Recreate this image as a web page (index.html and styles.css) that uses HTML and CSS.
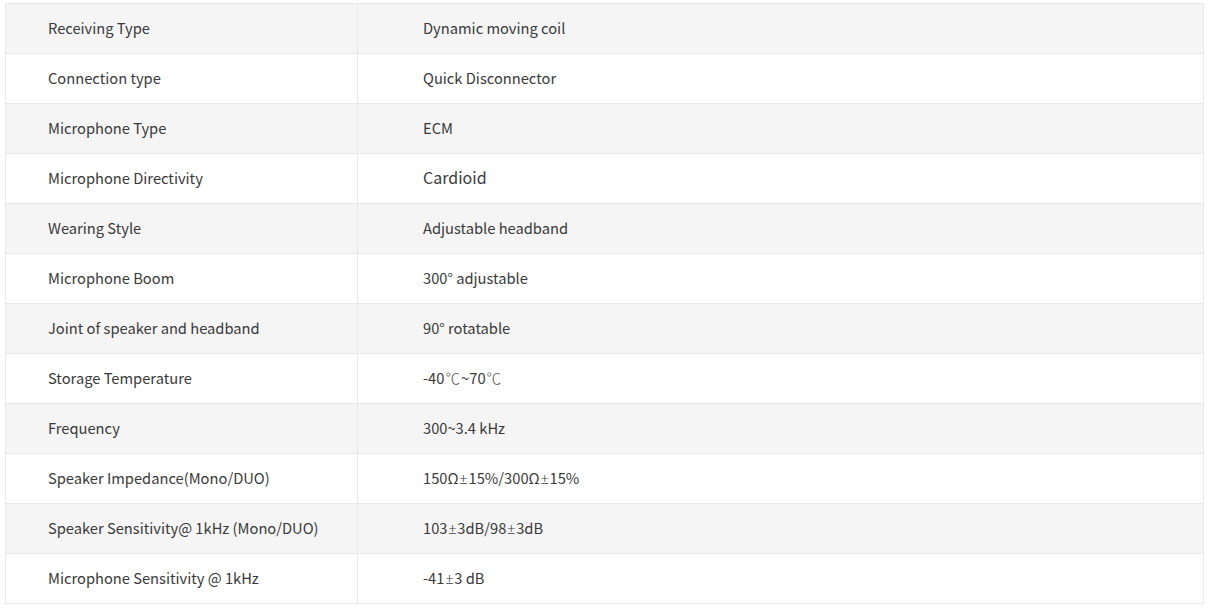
FILE: index.html
```html
<!DOCTYPE html>
<html>
<head>
<meta charset="utf-8">
<link rel="stylesheet" href="styles.css">
</head>
<body>
<div class="wrap">
<table class="spec">
<tbody>
<tr><td class="k">Receiving Type</td><td class="v">Dynamic moving coil</td></tr>
<tr><td class="k">Connection type</td><td class="v">Quick Disconnector</td></tr>
<tr><td class="k">Microphone Type</td><td class="v">ECM</td></tr>
<tr><td class="k">Microphone Directivity</td><td class="v"><span class="big">Cardioid</span></td></tr>
<tr><td class="k">Wearing Style</td><td class="v">Adjustable headband</td></tr>
<tr><td class="k">Microphone Boom</td><td class="v">300° adjustable</td></tr>
<tr><td class="k">Joint of speaker and headband</td><td class="v">90° rotatable</td></tr>
<tr><td class="k">Storage Temperature</td><td class="v">-40<span class="deg">℃</span>~70<span class="deg">℃</span></td></tr>
<tr><td class="k">Frequency</td><td class="v">300~3.4 kHz</td></tr>
<tr><td class="k">Speaker Impedance(Mono/DUO)</td><td class="v">150Ω<span class="sym">±</span>15%/300Ω<span class="sym">±</span>15%</td></tr>
<tr><td class="k">Speaker Sensitivity@ 1kHz (Mono/DUO)</td><td class="v">103<span class="sym">±</span>3dB/98<span class="sym">±</span>3dB</td></tr>
<tr><td class="k">Microphone Sensitivity @ 1kHz</td><td class="v">-41<span class="sym">±</span>3 dB</td></tr>
</tbody>
</table>
</div>
</body>
</html>
```
FILE: styles.css
```css
html, body {
  margin: 0;
  padding: 0;
  background: #fff;
}
.wrap {
  padding: 3px 6px 0 5px;
}
.spec {
  width: 1199px;
  border-collapse: collapse;
  table-layout: fixed;
  font-family: "Noto Sans CJK SC", "Noto Sans", sans-serif;
  font-size: 14.7px;
  font-weight: 400;
  color: #3a3a3a;
}
.spec tr {
  height: 50px;
}
.spec tr:nth-child(odd) {
  background: #f5f5f5;
}
.spec td {
  border: 1px solid #e9e9e9;
  padding: 0 0 2px 0;
  vertical-align: middle;
  line-height: 20px;
}
.spec td.k {
  width: 309px;
  padding-left: 42px;
}
.spec td.v {
  padding-left: 65px;
}
.big {
  font-size: 16px;
}
.sym {
  font-family: "Noto Sans", sans-serif;
  font-weight: 300;
  padding: 0 0.75px;
}
.deg {
  font-family: "Noto Sans CJK SC", sans-serif;
  font-weight: 300;
  color: #555;
  padding: 0 1px;
}
```
